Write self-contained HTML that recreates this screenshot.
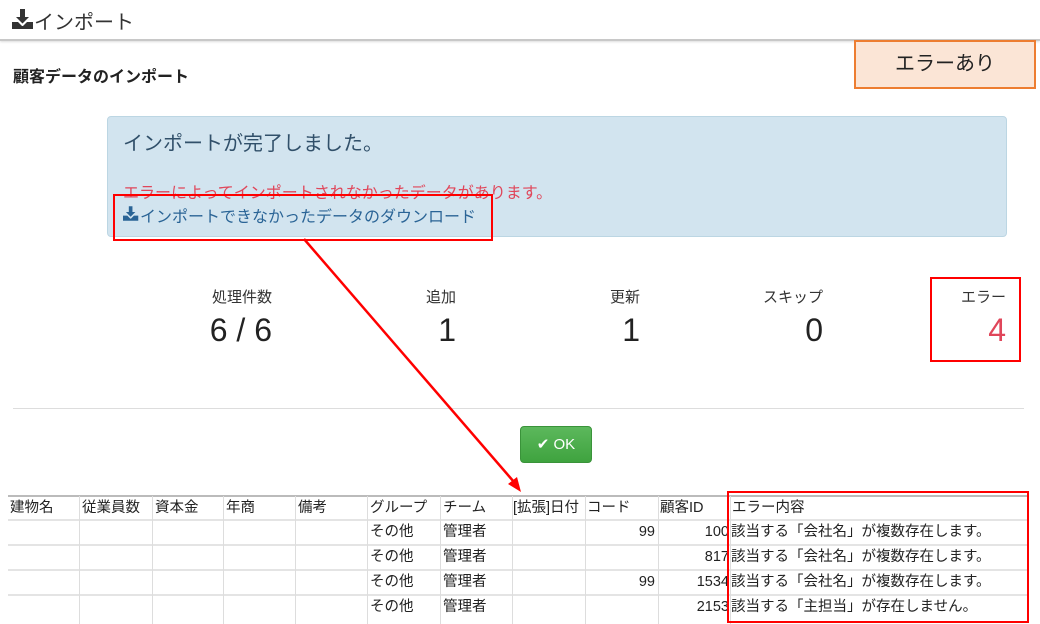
<!DOCTYPE html><html><head><meta charset="utf-8"><style>
body{margin:0;width:1040px;height:624px;overflow:hidden;background:#fff;font-family:"Liberation Sans","Noto Sans CJK JP",sans-serif;color:#333;position:relative}
.a{position:absolute}
.td{position:absolute;font-size:14.5px;color:#222;line-height:24px;white-space:nowrap}
</style></head><body>
<div class="a" style="left:0;top:0;width:1040px;height:39px;border-bottom:2px solid #c8c8c8;box-shadow:0 1px 2px #ddd"></div>
<svg class="a" style="left:12px;top:9px" width="22" height="20" viewBox="0 0 22 20"><path d="M8 0h5v8h4l-6.5 6.5L4 8h4z" fill="#333"/><path d="M0 13h6l4 4h1l4-4h6v7H0z" fill="#333"/></svg>
<div class="a" style="left:34px;top:6px;font-size:20px;color:#333">インポート</div>
<div class="a" style="left:13px;top:63px;font-size:16px;font-weight:bold;color:#222">顧客データのインポート</div>
<div class="a" style="left:854px;top:40px;width:178px;height:45px;background:#fbe5d6;border:2px solid #ed7d31;font-size:20px;text-align:center;line-height:45px;color:#222">エラーあり</div>
<div class="a" style="left:107px;top:116px;width:898px;height:119px;background:#d2e4ef;border:1px solid #bcd6e3;border-radius:4px"></div>
<div class="a" style="left:123px;top:127px;font-size:20px;color:#31506a">インポートが完了しました。</div>
<div class="a" style="left:123px;top:179px;font-size:16px;color:#e0465a">エラーによってインポートされなかったデータがあります。</div>
<svg class="a" style="left:123px;top:206px" width="16" height="15" viewBox="0 0 22 20"><path d="M8 0h5v8h4l-6.5 6.5L4 8h4z" fill="#2a6496"/><path d="M0 13h6l4 4h1l4-4h6v7H0z" fill="#2a6496"/></svg>
<div class="a" style="left:140px;top:203px;font-size:16px;color:#2a6496">インポートできなかったデータのダウンロード</div>
<div class="a" style="left:113px;top:194px;width:376px;height:43px;border:2px solid #f00"></div>
<div class="a" style="left:100px;top:286px;width:172px;text-align:right;font-size:15px">処理件数</div>
<div class="a" style="left:100px;top:312px;width:172px;text-align:right;font-size:32px;color:#222">6 / 6</div>
<div class="a" style="left:300px;top:286px;width:156px;text-align:right;font-size:15px">追加</div>
<div class="a" style="left:300px;top:312px;width:156px;text-align:right;font-size:32px;color:#222">1</div>
<div class="a" style="left:500px;top:286px;width:140px;text-align:right;font-size:15px">更新</div>
<div class="a" style="left:500px;top:312px;width:140px;text-align:right;font-size:32px;color:#222">1</div>
<div class="a" style="left:680px;top:286px;width:143px;text-align:right;font-size:15px">スキップ</div>
<div class="a" style="left:680px;top:312px;width:143px;text-align:right;font-size:32px;color:#222">0</div>
<div class="a" style="left:900px;top:286px;width:106px;text-align:right;font-size:15px">エラー</div>
<div class="a" style="left:900px;top:312px;width:106px;text-align:right;font-size:32px;color:#e0465a">4</div>
<div class="a" style="left:930px;top:277px;width:87px;height:81px;border:2px solid #f00"></div>
<div class="a" style="left:13px;top:408px;width:1011px;height:1px;background:#ddd"></div>
<div class="a" style="left:520px;top:426px;width:72px;height:37px;background:linear-gradient(#5cb85c,#3fa33f);border:1px solid #3a933a;border-radius:4px;box-sizing:border-box;color:#fff;font-size:15px;line-height:35px;text-align:center">✔ OK</div>
<div class="a" style="left:8px;top:495px;width:1020px;height:2px;background:#bbb"></div>
<div class="a" style="left:8px;top:519px;width:1020px;height:2px;background:#e4e4e4"></div>
<div class="a" style="left:8px;top:544px;width:1020px;height:2px;background:#e4e4e4"></div>
<div class="a" style="left:8px;top:569px;width:1020px;height:2px;background:#e4e4e4"></div>
<div class="a" style="left:8px;top:594px;width:1020px;height:2px;background:#e4e4e4"></div>
<div class="a" style="left:79px;top:496px;width:1px;height:128px;background:#ddd"></div>
<div class="a" style="left:152px;top:496px;width:1px;height:128px;background:#ddd"></div>
<div class="a" style="left:223px;top:496px;width:1px;height:128px;background:#ddd"></div>
<div class="a" style="left:295px;top:496px;width:1px;height:128px;background:#ddd"></div>
<div class="a" style="left:367px;top:496px;width:1px;height:128px;background:#ddd"></div>
<div class="a" style="left:440px;top:496px;width:1px;height:128px;background:#ddd"></div>
<div class="a" style="left:512px;top:496px;width:1px;height:128px;background:#ddd"></div>
<div class="a" style="left:585px;top:496px;width:1px;height:128px;background:#ddd"></div>
<div class="a" style="left:658px;top:496px;width:1px;height:128px;background:#ddd"></div>
<div class="a" style="left:730px;top:496px;width:1px;height:128px;background:#ddd"></div>
<div class="td" style="left:10px;top:496px">建物名</div><div class="td" style="left:82px;top:496px">従業員数</div><div class="td" style="left:155px;top:496px">資本金</div><div class="td" style="left:226px;top:496px">年商</div><div class="td" style="left:298px;top:496px">備考</div><div class="td" style="left:370px;top:496px">グループ</div><div class="td" style="left:443px;top:496px">チーム</div><div class="td" style="left:513px;top:496px">[拡張]日付</div><div class="td" style="left:587px;top:496px">コード</div><div class="td" style="left:660px;top:496px">顧客ID</div><div class="td" style="left:732px;top:496px">エラー内容</div>
<div class="td" style="left:370px;top:520px">その他</div><div class="td" style="left:443px;top:520px">管理者</div><div class="td" style="left:585px;top:520px;width:70px;text-align:right">99</div><div class="td" style="left:658px;top:520px;width:71px;text-align:right">100</div><div class="td" style="left:731px;top:520px">該当する「会社名」が複数存在します。</div>
<div class="td" style="left:370px;top:545px">その他</div><div class="td" style="left:443px;top:545px">管理者</div><div class="td" style="left:658px;top:545px;width:71px;text-align:right">817</div><div class="td" style="left:731px;top:545px">該当する「会社名」が複数存在します。</div>
<div class="td" style="left:370px;top:570px">その他</div><div class="td" style="left:443px;top:570px">管理者</div><div class="td" style="left:585px;top:570px;width:70px;text-align:right">99</div><div class="td" style="left:658px;top:570px;width:71px;text-align:right">1534</div><div class="td" style="left:731px;top:570px">該当する「会社名」が複数存在します。</div>
<div class="td" style="left:370px;top:595px">その他</div><div class="td" style="left:443px;top:595px">管理者</div><div class="td" style="left:658px;top:595px;width:71px;text-align:right">2153</div><div class="td" style="left:731px;top:595px">該当する「主担当」が存在しません。</div>
<div class="a" style="left:727px;top:491px;width:298px;height:128px;border:2px solid #f00"></div>
<svg class="a" style="left:0;top:0" width="1040" height="624"><line x1="304" y1="239" x2="514" y2="482" stroke="#f00" stroke-width="2.5"/><path d="M521 492l-13-8 9-7z" fill="#f00"/></svg>
</body></html>
